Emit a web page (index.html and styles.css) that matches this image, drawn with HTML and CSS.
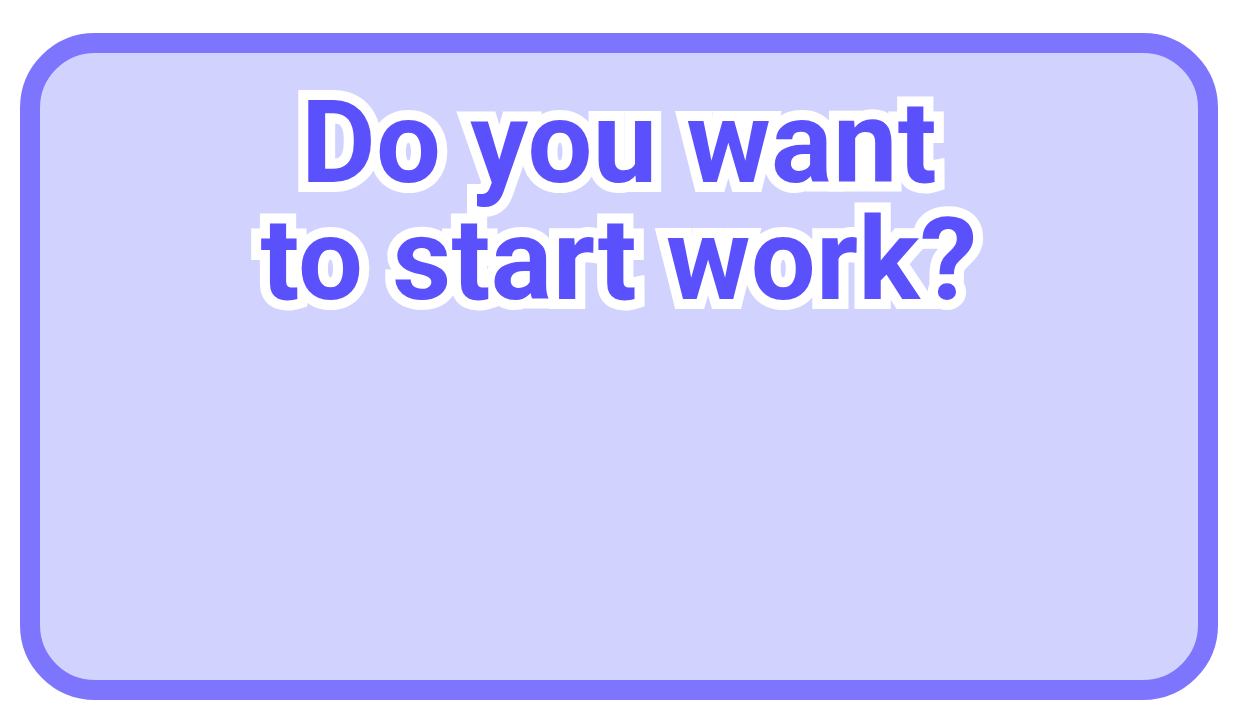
FILE: index.html
```html
<!DOCTYPE html>
<html>
<head>
<meta charset="utf-8">
<link rel="stylesheet" href="styles.css">
</head>
<body>
<div class="card">
  <h1 class="title">Do you want<br>to start work?</h1>
</div>
</body>
</html>
```
FILE: styles.css
```css
html, body {
  margin: 0;
  padding: 0;
  background: #ffffff;
}
body {
  width: 1239px;
  height: 723px;
  padding: 33px 21px 23px 20px;
  box-sizing: border-box;
}
.card {
  box-sizing: border-box;
  width: 1198px;
  height: 667px;
  border: 20px solid #7d75fe;
  border-radius: 75px;
  background: #d2d2fe;
  padding-top: 31px;
}
.title {
  margin: 0;
  text-align: center;
  font-family: Roboto, "Liberation Sans", sans-serif;
  font-weight: 700;
  font-size: 115px;
  line-height: 117px;
  letter-spacing: 0.3px;
  color: #5a50fc;
  -webkit-text-stroke: 20px #ffffff;
  paint-order: stroke fill;
  stroke-linejoin: round;
}
```
